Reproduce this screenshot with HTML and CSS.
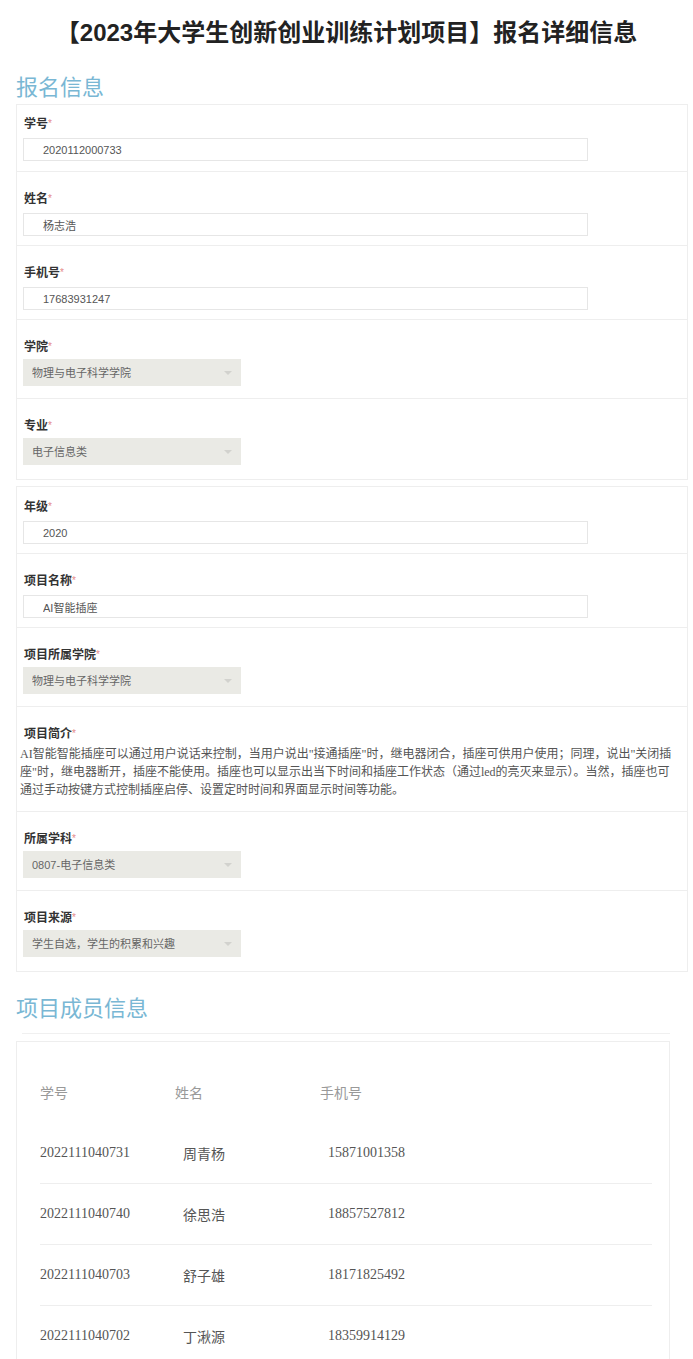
FILE: index.html
```html
<!doctype html>
<html>
  <head>
    <meta charset="UTF-8" />
    <meta name="viewport" content="width=device-width, initial-scale=1">
    <title>报名详细信息</title>
    <link rel="stylesheet" href="styles.css">
  </head>
  <body>
    <h1 class="page-title">【2023年大学生创新创业训练计划项目】报名详细信息</h1>

    <h2 class="section-title">报名信息</h2>
    <form class="form-card">
      <div class="field">
        <label>学号<span class="req">*</span></label>
        <input class="text-input" type="text" value="2020112000733" readonly />
      </div>
      <div class="field">
        <label>姓名<span class="req">*</span></label>
        <input class="text-input" type="text" value="杨志浩" readonly />
      </div>
      <div class="field">
        <label>手机号<span class="req">*</span></label>
        <input class="text-input" type="text" value="17683931247" readonly />
      </div>
      <div class="field field-select">
        <label>学院<span class="req">*</span></label>
        <div class="select-box"><select><option>物理与电子科学学院</option></select></div>
      </div>
      <div class="field field-select">
        <label>专业<span class="req">*</span></label>
        <div class="select-box"><select><option>电子信息类</option></select></div>
      </div>
    </form>

    <form class="form-card form-card-next">
      <div class="field">
        <label>年级<span class="req">*</span></label>
        <input class="text-input" type="text" value="2020" readonly />
      </div>
      <div class="field">
        <label>项目名称<span class="req">*</span></label>
        <input class="text-input" type="text" value="AI智能插座" readonly />
      </div>
      <div class="field field-select">
        <label>项目所属学院<span class="req">*</span></label>
        <div class="select-box"><select><option>物理与电子科学学院</option></select></div>
      </div>
      <div class="field field-text">
        <label>项目简介<span class="req">*</span></label>
        <p class="intro">AI智能智能插座可以通过用户说话来控制，当用户说出"接通插座"时，继电器闭合，插座可供用户使用；同理，说出"关闭插座"时，继电器断开，插座不能使用。插座也可以显示出当下时间和插座工作状态（通过led的亮灭来显示）。当然，插座也可通过手动按键方式控制插座启停、设置定时时间和界面显示时间等功能。</p>
      </div>
      <div class="field field-select">
        <label>所属学科<span class="req">*</span></label>
        <div class="select-box"><select><option>0807-电子信息类</option></select></div>
      </div>
      <div class="field field-select">
        <label>项目来源<span class="req">*</span></label>
        <div class="select-box"><select><option>学生自选，学生的积累和兴趣</option></select></div>
      </div>
    </form>

    <h2 class="section-title section-members">项目成员信息</h2>
    <div class="divider"></div>
    <div class="member-card">
      <table class="members">
        <tr class="head">
          <td>学号</td>
          <td>姓名</td>
          <td>手机号</td>
        </tr>
        <tr>
          <td>2022111040731</td>
          <td>周青杨</td>
          <td>15871001358</td>
        </tr>
        <tr>
          <td>2022111040740</td>
          <td>徐思浩</td>
          <td>18857527812</td>
        </tr>
        <tr>
          <td>2022111040703</td>
          <td>舒子雄</td>
          <td>18171825492</td>
        </tr>
        <tr>
          <td>2022111040702</td>
          <td>丁湫源</td>
          <td>18359914129</td>
        </tr>
      </table>
    </div>
  </body>
</html>
```

FILE: styles.css
```css
body {
  margin: 0;
  font-family: "Liberation Sans", "Noto Sans CJK SC", sans-serif;
  color: #333;
  background: #fff;
}
.page-title {
  margin: 0;
  padding-top: 18px;
  font-size: 24px;
  line-height: 30px;
  font-weight: bold;
  text-align: center;
  color: #222;
}
.section-title {
  margin: 26px 0 0 16px;
  font-size: 22px;
  line-height: 28px;
  font-weight: normal;
  color: #79b7d4;
}
.form-card {
  margin: 2px 5px 0 16px;
  border: 1px solid #eee;
}
.form-card-next {
  margin-top: 6px;
}
.field {
  padding: 19px 0 9px 6px;
  border-bottom: 1px solid #eee;
}
.field:first-child {
  padding-top: 11px;
  padding-bottom: 10px;
}
.form-card-next .field:first-child {
  padding-top: 12px;
  padding-bottom: 9px;
}
.field:last-child {
  border-bottom: none;
}
.field label {
  display: block;
  padding-left: 1px;
  font-size: 12px;
  line-height: 16px;
  font-weight: bold;
  color: #333;
}
.req {
  color: #e58a8a;
  font-weight: normal;
  font-size: 10px;
  vertical-align: top;
}
.text-input {
  display: block;
  box-sizing: border-box;
  width: 565px;
  height: 23px;
  margin-top: 6px;
  padding: 0 0 0 19px;
  border: 1px solid #e6e6e6;
  background: #fff;
  font-family: "Liberation Sans", "Noto Sans CJK SC", sans-serif;
  font-size: 11px;
  color: #555;
  outline: none;
}
.field-select {
  padding-bottom: 12px;
}
.field-select:last-child {
  padding-bottom: 14px;
}
.select-box {
  position: relative;
  width: 218px;
  height: 27px;
  margin-top: 4px;
  background: #eaeae5;
}
.select-box select {
  -webkit-appearance: none;
  appearance: none;
  width: 100%;
  height: 100%;
  padding: 0 0 0 9px;
  border: none;
  background: transparent;
  font-family: "Liberation Sans", "Noto Sans CJK SC", sans-serif;
  font-size: 11px;
  color: #666;
}
.select-box:after {
  content: '';
  position: absolute;
  right: 9px;
  top: 12px;
  border-left: 4px solid transparent;
  border-right: 4px solid transparent;
  border-top: 4px solid #d2d2ce;
}
.field-text {
  padding-left: 3px;
  padding-right: 8px;
  padding-bottom: 12px;
}
.field-text label {
  padding-left: 4px;
}
.intro {
  margin: 3px 0 0;
  font-family: "Liberation Serif", "Noto Sans CJK SC", serif;
  font-size: 12px;
  line-height: 18px;
  color: #555;
}
.section-members {
  margin-top: 23px;
}
.divider {
  margin: 10px 23px 0 22px;
  border-top: 1px solid #f0f0f0;
}
.member-card {
  margin: 7px 23px 0 16px;
  padding: 18px 17px 0 23px;
  border: 1px solid #eee;
  border-bottom: none;
}
.members {
  width: 100%;
  border-collapse: collapse;
  font-family: "Liberation Serif", "Noto Sans CJK SC", serif;
  font-size: 14px;
  color: #555;
}
.members td {
  height: 60px;
  padding: 0;
  border-bottom: 1px solid #eee;
}
.members tr:last-child td {
  border-bottom: none;
}
.members td:nth-child(1) {
  width: 135px;
}
.members td:nth-child(2) {
  width: 137px;
  padding-left: 8px;
}
.members td:nth-child(3) {
  padding-left: 8px;
}
.members .head td {
  height: 63px;
  color: #999;
  border-bottom: none;
}
.members .head td:nth-child(2),
.members .head td:nth-child(3) {
  padding-left: 0;
}
```
